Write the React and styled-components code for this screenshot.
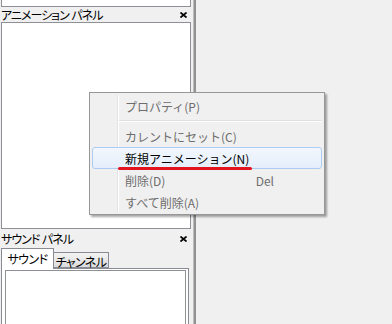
import React from "react";
import styled, { createGlobalStyle } from "styled-components";

const GlobalStyle = createGlobalStyle`
  html, body {
    margin: 0;
    padding: 0;
    background: #f0f0f0;
  }
  body {
    font-family: "Noto Sans CJK JP", "Noto Sans", sans-serif;
    color: #000;
  }
`;

const Screen = styled.div`
  position: relative;
  display: flex;
  width: 392px;
  height: 324px;
  overflow: hidden;
  background: #f0f0f0;
`;

const LeftPane = styled.div`
  width: 192px;
  padding-left: 1px;
  display: flex;
  flex-direction: column;
`;

const Splitter = styled.div`
  width: 3px;
  background: #929292;
  border-left: 1px solid #bdbdbd;
  box-sizing: border-box;
`;

const Workspace = styled.div`
  flex: 1;
  background: #f0f0f0;
`;

const StubBox = styled.div`
  width: 190px;
  height: 7px;
  box-sizing: border-box;
  background: #fff;
  border: 1px solid #8e9096;
  border-top: none;
`;

const PanelHeader = styled.div`
  display: flex;
  align-items: center;
  justify-content: space-between;
  width: 190px;
  height: ${({ $h }) => $h}px;
  padding-right: 4px;
  box-sizing: border-box;
  font-size: 12px;
  line-height: 14px;
  font-feature-settings: "palt";
  letter-spacing: -1px;
  word-spacing: 1px;
  white-space: pre;
`;

const ListBox = styled.div`
  width: 190px;
  height: 207px;
  box-sizing: border-box;
  background: #fff;
  border: 1px solid #8e9096;
`;

const TabRow = styled.div`
  display: flex;
  align-items: flex-end;
  height: 20px;
  position: relative;
  z-index: 1;
`;

const Tab = styled.div`
  box-sizing: border-box;
  width: ${({ $active }) => ($active ? 53 : 56)}px;
  height: ${({ $active }) => ($active ? 21 : 16)}px;
  margin-bottom: ${({ $active }) => ($active ? -1 : 0)}px;
  margin-left: ${({ $active }) => ($active ? 0 : -1)}px;
  padding-top: ${({ $active }) => ($active ? 2 : 1)}px;
  text-align: center;
  border: 1px solid #898c95;
  border-bottom: ${({ $active }) => ($active ? "none" : "1px solid #898c95")};
  background: ${({ $active }) =>
    $active ? "#fff" : "linear-gradient(#f3f3f3, #dcdcdc)"};
  font-size: 12px;
  line-height: 15px;
  font-feature-settings: "palt";
  letter-spacing: -0.6px;
  white-space: nowrap;
`;

const TabBody = styled.div`
  flex: 1;
  width: 188px;
  box-sizing: border-box;
  background: #fff;
  border: 1px solid #898c95;
  border-bottom: none;
  padding: 1px 2px 0 3px;
  display: flex;
`;

const InnerList = styled.div`
  flex: 1;
  border: 1px solid #8e9096;
  border-bottom: none;
  background: #fff;
`;

const CloseIcon = () => (
  <svg width="7" height="6" viewBox="0 0 7 6">
    <path d="M0.5 0.5 L6.5 5.5 M6.5 0.5 L0.5 5.5" stroke="#000" strokeWidth="1.7" />
  </svg>
);

const Menu = styled.div`
  position: absolute;
  left: 89px;
  top: 92px;
  width: 236px;
  box-sizing: border-box;
  padding: 2px 2px 1px 2px;
  background: #f0f0f0;
  border: 1px solid #979797;
  box-shadow: 2px 2px 2px rgba(0, 0, 0, 0.35);
  z-index: 5;

  &::before {
    content: "";
    position: absolute;
    top: 2px;
    bottom: 2px;
    left: 27px;
    width: 1px;
    background: #e2e3e3;
    border-right: 1px solid #fff;
  }
`;

const MenuItem = styled.div`
  position: relative;
  display: flex;
  align-items: center;
  justify-content: space-between;
  height: 22px;
  box-sizing: border-box;
  padding: 0 47px 0 32px;
  font-size: 12px;
  color: ${({ $disabled }) => ($disabled ? "#6d6d6d" : "#000")};
  border: 1px solid ${({ $hot }) => ($hot ? "#aeccf1" : "transparent")};
  border-radius: 3px;
  background: ${({ $hot }) =>
    $hot ? "linear-gradient(#f3f7fd, #e4eefb)" : "transparent"};
  white-space: nowrap;
`;

const MenuSeparator = styled.div`
  height: 8px;
  margin-left: 27px;
  display: flex;
  align-items: center;

  &::after {
    content: "";
    flex: 1;
    height: 1px;
    background: #e0e0e0;
    border-bottom: 1px solid #fff;
  }
`;

const Annotation = styled.div`
  position: absolute;
  left: 25px;
  top: 19px;
  width: 134px;
  height: 3px;
  border-radius: 2px;
  background: #e3141e;
`;

export default function App() {
  return (
    <>
      <GlobalStyle />
      <Screen>
        <LeftPane>
          <StubBox />
          <PanelHeader $h={15}>
            <span>アニメーション パネル</span>
            <CloseIcon />
          </PanelHeader>
          <ListBox />
          <PanelHeader $h={19}>
            <span>サウンド パネル</span>
            <CloseIcon />
          </PanelHeader>
          <TabRow>
            <Tab $active>サウンド</Tab>
            <Tab>チャンネル</Tab>
          </TabRow>
          <TabBody>
            <InnerList />
          </TabBody>
        </LeftPane>
        <Splitter />
        <Workspace />
        <Menu>
          <MenuItem $disabled>プロパティ(P)</MenuItem>
          <MenuSeparator />
          <MenuItem $disabled>カレントにセット(C)</MenuItem>
          <MenuItem $hot>
            新規アニメーション(N)
            <Annotation />
          </MenuItem>
          <MenuItem $disabled>
            <span>削除(D)</span>
            <span>Del</span>
          </MenuItem>
          <MenuItem $disabled>すべて削除(A)</MenuItem>
        </Menu>
      </Screen>
    </>
  );
}
